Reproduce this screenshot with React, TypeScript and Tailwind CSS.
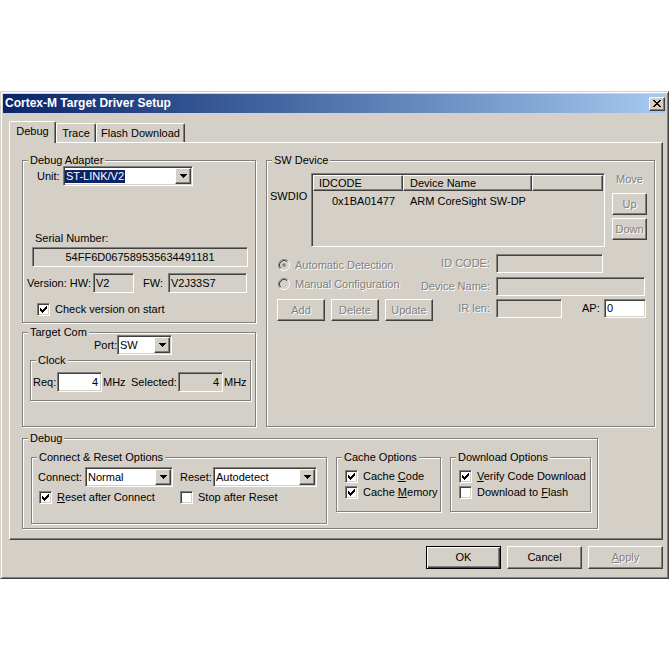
import React from "react";

// classic Win2000 bevels
const sunken =
  "border border-t-[#808080] border-l-[#808080] border-r-white border-b-white shadow-[inset_1px_1px_0_#404040,inset_-1px_-1px_0_#d4d0c8]";
const raised =
  "border border-t-white border-l-white border-r-[#404040] border-b-[#404040] shadow-[inset_-1px_-1px_0_#808080]";
const etched = "border border-[#808080] shadow-[inset_1px_1px_0_#fff,1px_1px_0_#fff]";
const dim = "text-[#808080] [text-shadow:1px_1px_0_#fff]";

const Group = ({
  label,
  className = "",
  children,
}: {
  label: string;
  className?: string;
  children?: React.ReactNode;
}) => (
  <div className={`${etched} flex flex-col shrink-0 ${className}`}>
    <div className="-mt-[7px] -mb-[6px] ml-[5px] h-[13px] w-fit bg-[#d4d0c8] px-[2px] leading-[13px] whitespace-nowrap">
      {label}
    </div>
    {children}
  </div>
);

const Arrow = () => (
  <svg width="7" height="4" viewBox="0 0 7 4" shapeRendering="crispEdges">
    <path d="M0 0h7v1H0z M1 1h5v1H1z M2 2h3v1H2z M3 3h1v1H3z" fill="#000" />
  </svg>
);

const Combo = ({
  className,
  value,
  selected,
}: {
  className: string;
  value: string;
  selected?: boolean;
}) => (
  <div className={`${sunken} ${className} h-[20px] bg-white flex items-center justify-between shrink-0`}>
    {selected ? (
      <span className="ml-[1px] bg-[#0a246a] px-[1px] text-white">{value}</span>
    ) : (
      <span className="pl-[2px]">{value}</span>
    )}
    <div className={`${raised} mr-[1px] w-[16px] h-[16px] bg-[#d4d0c8] flex items-center justify-center`}>
      <Arrow />
    </div>
  </div>
);

const Check = ({ checked }: { checked?: boolean }) => (
  <div className={`${sunken} w-[13px] h-[13px] bg-white shrink-0 flex items-center justify-center`}>
    {checked && (
      <svg width="9" height="9" viewBox="0 0 9 9" shapeRendering="crispEdges">
        <path
          d="M1 3h1v3H1z M2 4h1v3H2z M3 5h1v3H3z M4 4h1v3H4z M5 3h1v3H5z M6 2h1v3H6z M7 1h1v3H7z"
          fill="#000"
        />
      </svg>
    )}
  </div>
);

const Radio = ({ on }: { on?: boolean }) => (
  <svg width="12" height="12" viewBox="0 0 12 12" className="shrink-0">
    <circle cx="6" cy="6" r="4" fill="#d4d0c8" />
    <path d="M2.11 9.89A5.5 5.5 0 0 1 9.89 2.11" stroke="#808080" fill="none" />
    <path d="M9.89 2.11A5.5 5.5 0 0 1 2.11 9.89" stroke="#fff" fill="none" />
    <path d="M2.82 9.18A4.5 4.5 0 0 1 9.18 2.82" stroke="#404040" fill="none" />
    <path d="M9.18 2.82A4.5 4.5 0 0 1 2.82 9.18" stroke="#d4d0c8" fill="none" />
    {on && <circle cx="6" cy="6" r="1.8" fill="#808080" />}
  </svg>
);

const Btn = ({
  className,
  disabled,
  children,
}: {
  className: string;
  disabled?: boolean;
  children: React.ReactNode;
}) => (
  <button
    type="button"
    className={`${raised} ${className} bg-[#d4d0c8] flex items-center justify-center shrink-0 ${disabled ? dim : ""}`}
  >
    {children}
  </button>
);

const CheckRow = ({
  className,
  checked,
  children,
}: {
  className: string;
  checked?: boolean;
  children: React.ReactNode;
}) => (
  <div className={`flex items-center h-[13px] pl-[8px] ${className}`}>
    <Check checked={checked} />
    <span className="ml-[5px] whitespace-nowrap">{children}</span>
  </div>
);

export default function App() {
  return (
    <div className="w-[671px] h-[671px] bg-white pt-[91px] font-['Liberation_Sans',Arial,sans-serif] text-[11px] leading-[13px] text-black">
      <div className="w-[669px] h-[488px] bg-[#d4d0c8] border border-t-[#d4d0c8] border-l-[#d4d0c8] border-r-[#404040] border-b-[#404040] shadow-[inset_1px_1px_0_#fff,inset_-1px_-1px_0_#808080] p-[2px] flex flex-col">
        {/* title bar */}
        <div className="h-[19px] bg-linear-to-r from-[#0a246a] to-[#a6caf0] flex items-center justify-between pl-[2px] pr-[1px]">
          <span className="text-[12px] font-bold text-white">Cortex-M Target Driver Setup</span>
          <div className={`${raised} w-[16px] h-[14px] bg-[#d4d0c8] flex items-center justify-center`}>
            <svg width="8" height="7" viewBox="0 0 8 7" shapeRendering="crispEdges">
              <path
                d="M0 0h2v1H0z M6 0h2v1H6z M1 1h2v1H1z M5 1h2v1H5z M2 2h4v1H2z M3 3h2v1H3z M2 4h4v1H2z M1 5h2v1H1z M5 5h2v1H5z M0 6h2v1H0z M6 6h2v1H6z"
                fill="#000"
              />
            </svg>
          </div>
        </div>

        {/* tabs */}
        <div className="mt-[8px] h-[21px] flex items-end pl-[6px]">
          <div className="relative z-10 -mb-[1px] h-[22px] w-[47px] bg-[#d4d0c8] border-x border-t border-l-white border-t-white border-r-[#404040] shadow-[inset_-1px_0_0_#808080] rounded-t-[2px] flex justify-center pt-[3px]">
            Debug
          </div>
          <div className="h-[19px] w-[40px] border-x border-t border-l-white border-t-white border-r-[#404040] shadow-[inset_-1px_0_0_#808080] rounded-t-[2px] flex justify-center pt-[3px]">
            Trace
          </div>
          <div className="h-[19px] w-[89px] border-x border-t border-l-white border-t-white border-r-[#404040] shadow-[inset_-1px_0_0_#808080] rounded-t-[2px] flex justify-center pt-[3px]">
            Flash Download
          </div>
        </div>

        {/* tab panel */}
        <div className="ml-[6px] w-[654px] h-[398px] border border-l-white border-t-white border-r-[#404040] border-b-[#404040] shadow-[inset_-1px_-1px_0_#808080] pl-[12px] pt-[17px] flex flex-col">
          <div className="flex gap-[10px] h-[267px]">
            <div className="w-[234px] flex flex-col gap-[9px]">
              <Group label="Debug Adapter" className="h-[163px]">
                <div className="mt-[5px] flex items-center pl-[14px]">
                  <span className="w-[26px]">Unit:</span>
                  <Combo className="w-[130px]" value="ST-LINK/V2" selected />
                </div>
                <div className="mt-[46px] pl-[12px]">Serial Number:</div>
                <div className={`${sunken} mt-[2px] ml-[9px] w-[216px] h-[20px] flex items-center justify-center`}>
                  54FF6D067589535634491181
                </div>
                <div className="mt-[6px] flex items-center pl-[4px]">
                  <span className="w-[66px]">Version: HW:</span>
                  <div className={`${sunken} w-[41px] h-[20px] flex items-center pl-[2px]`}>V2</div>
                  <span className="ml-[9px] w-[25px]">FW:</span>
                  <div className={`${sunken} w-[79px] h-[20px] flex items-center pl-[2px]`}>V2J33S7</div>
                </div>
                <div className="mt-[10px] flex items-center h-[13px] pl-[14px]">
                  <Check checked />
                  <span className="ml-[5px]">Check version on start</span>
                </div>
              </Group>

              <Group label="Target Com" className="h-[95px]">
                <div className="mt-[2px] flex items-center pl-[71px]">
                  <span className="w-[23px]">Port:</span>
                  <Combo className="w-[55px]" value="SW" />
                </div>
                <Group label="Clock" className="mt-[5px] ml-[7px] w-[221px] h-[41px]">
                  <div className="mt-[11px] flex items-center pl-[2px]">
                    <span className="w-[24px]">Req:</span>
                    <div className={`${sunken} w-[45px] h-[20px] bg-white flex items-center justify-end pr-[3px]`}>4</div>
                    <span className="ml-[1px] w-[28px]">MHz</span>
                    <span className="w-[47px]">Selected:</span>
                    <div className={`${sunken} w-[45px] h-[20px] flex items-center justify-end pr-[3px]`}>4</div>
                    <span className="ml-[1px]">MHz</span>
                  </div>
                </Group>
              </Group>
            </div>

            <Group label="SW Device" className="w-[389px] h-[267px]">
              <div className="mt-[12px] flex items-start">
                <div className="w-[44px] pl-[3px] pt-[17px]">SWDIO</div>
                <div className={`${sunken} w-[294px] h-[74px] bg-[#d4d0c8] p-[1px] flex flex-col shrink-0`}>
                  <div className="flex h-[16px]">
                    <div className={`${raised} w-[90px] pl-[5px] flex items-center`}>IDCODE</div>
                    <div className={`${raised} w-[129px] pl-[6px] flex items-center`}>Device Name</div>
                    <div className={`${raised} flex-1`} />
                  </div>
                  <div className="mt-[4px] flex">
                    <span className="w-[90px] pl-[19px]">0x1BA01477</span>
                    <span className="pl-[7px]">ARM CoreSight SW-DP</span>
                  </div>
                </div>
                <div className="ml-[7px] w-[35px] flex flex-col items-center">
                  <span className={dim}>Move</span>
                  <Btn className="mt-[7px] w-[35px] h-[22px]" disabled>
                    Up
                  </Btn>
                  <Btn className="mt-[3px] w-[35px] h-[22px]" disabled>
                    Down
                  </Btn>
                </div>
              </div>

              <div className="mt-[7px] flex items-center h-[19px]">
                <div className="w-[223px] pl-[11px] flex items-center justify-between">
                  <div className={`mt-[3px] flex items-center ${dim}`}>
                    <Radio on />
                    <span className="ml-[5px]">Automatic Detection</span>
                  </div>
                  <span className={dim}>ID CODE:</span>
                </div>
                <div className={`${sunken} ml-[6px] w-[107px] h-[19px]`} />
              </div>
              <div className="mt-[4px] flex items-center h-[19px]">
                <div className="w-[223px] pl-[11px] flex items-center justify-between">
                  <div className={`mb-[5px] flex items-center ${dim}`}>
                    <Radio />
                    <span className="ml-[5px]">Manual Configuration</span>
                  </div>
                  <span className={dim}>Device Name:</span>
                </div>
                <div className={`${sunken} ml-[6px] w-[149px] h-[19px]`} />
              </div>
              <div className="mt-[3px] flex items-start">
                <div className="w-[223px] pl-[10px] flex items-start justify-between">
                  <div className="flex gap-[6px]">
                    <Btn className="w-[48px] h-[22px]" disabled>
                      Add
                    </Btn>
                    <Btn className="w-[48px] h-[22px]" disabled>
                      Delete
                    </Btn>
                    <Btn className="w-[48px] h-[22px]" disabled>
                      Update
                    </Btn>
                  </div>
                  <span className={`h-[19px] flex items-center ${dim}`}>IR len:</span>
                </div>
                <div className={`${sunken} ml-[6px] w-[66px] h-[19px]`} />
                <span className="ml-[20px] w-[22px] h-[19px] flex items-center">AP:</span>
                <div className={`${sunken} w-[42px] h-[19px] bg-white flex items-center pl-[2px]`}>0</div>
              </div>
            </Group>
          </div>

          <Group label="Debug" className="mt-[11px] w-[576px] h-[91px]">
            <div className="mt-[18px] flex items-start pl-[8px]">
              <Group label="Connect & Reset Options" className="w-[296px] h-[67px]">
                <div className="mt-[9px] flex items-center pl-[6px]">
                  <span className="w-[47px]">Connect:</span>
                  <Combo className="w-[88px]" value="Normal" />
                  <span className="ml-[7px] w-[33px]">Reset:</span>
                  <Combo className="w-[104px]" value="Autodetect" />
                </div>
                <div className="mt-[4px] flex items-center h-[13px] pl-[7px]">
                  <div className="w-[141px] flex items-center">
                    <Check checked />
                    <span className="ml-[5px]">
                      <u>R</u>eset after Connect
                    </span>
                  </div>
                  <Check />
                  <span className="ml-[5px]">Stop after Reset</span>
                </div>
              </Group>
              <Group label="Cache Options" className="ml-[9px] w-[105px] h-[55px]">
                <CheckRow className="mt-[12px]" checked>
                  Cache <u>C</u>ode
                </CheckRow>
                <CheckRow className="mt-[3px]" checked>
                  Cache <u>M</u>emory
                </CheckRow>
              </Group>
              <Group label="Download Options" className="ml-[9px] w-[141px] h-[55px]">
                <CheckRow className="mt-[12px]" checked>
                  <u>V</u>erify Code Download
                </CheckRow>
                <CheckRow className="mt-[3px]">
                  Download to <u>F</u>lash
                </CheckRow>
              </Group>
            </div>
          </Group>
        </div>

        {/* dialog buttons */}
        <div className="mt-[6px] ml-[6px] w-[654px] flex justify-end gap-[6px]">
          <button
            type="button"
            className="w-[75px] h-[23px] bg-[#d4d0c8] border border-black shadow-[inset_1px_1px_0_#fff,inset_-1px_-1px_0_#404040,inset_-2px_-2px_0_#808080]"
          >
            OK
          </button>
          <Btn className="w-[75px] h-[23px]">Cancel</Btn>
          <Btn className="w-[75px] h-[23px]" disabled>
            <u>A</u>pply
          </Btn>
        </div>
      </div>
    </div>
  );
}
